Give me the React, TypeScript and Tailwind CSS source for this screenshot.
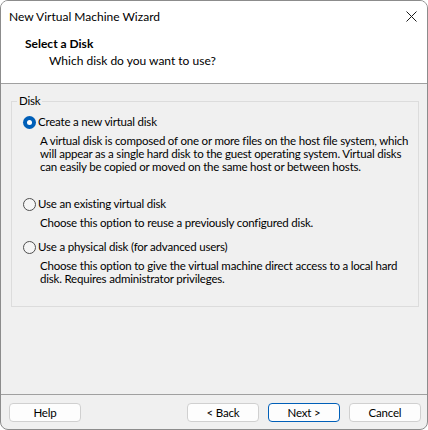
import React from "react";

const OPTIONS = [
    {
        label: "Create a new virtual disk",
        lines: [
            "A virtual disk is composed of one or more files on the host file system, which",
            "will appear as a single hard disk to the guest operating system. Virtual disks",
            "can easily be copied or moved on the same host or between hosts.",
        ],
        checked: true,
        gap: "mt-[4px]",
    },
    {
        label: "Use an existing virtual disk",
        lines: ["Choose this option to reuse a previously configured disk."],
        checked: false,
        gap: "mt-[23px]",
    },
    {
        label: "Use a physical disk (for advanced users)",
        lines: [
            "Choose this option to give the virtual machine direct access to a local hard",
            "disk. Requires administrator privileges.",
        ],
        checked: false,
        gap: "mt-[10px]",
    },
];

function Radio({ checked }: { checked: boolean }) {
    if (checked) {
        return (
            <span className="flex h-[13px] w-[13px] shrink-0 items-center justify-center rounded-full bg-[#005fb8]">
                <span className="h-[5px] w-[5px] rounded-full bg-white"></span>
            </span>
        );
    }
    return <span className="h-[13px] w-[13px] shrink-0 rounded-full border border-[#4f4f4f] bg-[#f5f5f5]"></span>;
}

function Button({ text, primary }: { text: string; primary?: boolean }) {
    return (
        <button
            className={
                primary
                    ? "h-[19px] w-[72px] rounded-[4px] border border-[#005fb8] bg-[#fdfdfd] leading-none text-black"
                    : "h-[19px] w-[72px] rounded-[4px] border border-[#d0d0d0] bg-[#fdfdfd] leading-none text-black"
            }
        >
            {text}
        </button>
    );
}

export default function App() {
    return (
        <div className="h-[430px] w-[428px] bg-white font-[family-name:Lato,'Liberation_Sans',sans-serif] text-[11.5px] tracking-[-0.2px] text-black">
            <div className="flex h-full flex-col overflow-hidden rounded-[8px] border border-[#8c8c8c] bg-[#f0f0f0]">
                {/* title bar */}
                <div className="flex h-[31px] shrink-0 items-center justify-between bg-white pl-[8px] pr-[10px]">
                    <span className="text-[12px] leading-[16px] tracking-normal">New Virtual Machine Wizard</span>
                    <svg width="11" height="11" viewBox="0 0 11 11" className="mt-[-1px]">
                        <path d="M0.5 0.5 L10.5 10.5 M10.5 0.5 L0.5 10.5" stroke="#1a1a1a" strokeWidth="1" />
                    </svg>
                </div>

                {/* header */}
                <div className="h-[52px] shrink-0 border-b border-[#a0a0a0] bg-white pl-[24px] pt-[4px]">
                    <div className="text-[12px] font-bold leading-[16px] tracking-normal">Select a Disk</div>
                    <div className="ml-[24px] mt-[1px] text-[12px] leading-[16px] tracking-normal">Which disk do you want to use?</div>
                </div>

                {/* body */}
                <div className="flex-1 pl-[10px] pr-[8px] pt-[9px]">
                    <fieldset className="min-w-0 border border-[#dcdcdc] p-0">
                        <legend className="ml-[5px] px-[2px] leading-[16px]">Disk</legend>
                        <div className="flex flex-col pb-[21px] pl-[11px] pt-[5px]">
                            {OPTIONS.map((opt, index) => (
                                <div key={index} className={index === 0 ? "" : opt.gap}>
                                    <div className="flex h-[16px] items-center gap-[2px]">
                                        <Radio checked={opt.checked} />
                                        <span className="leading-[16px]">{opt.label}</span>
                                    </div>
                                    <div className="mt-[4px] pl-[17px] leading-[13px]">
                                        {opt.lines.map((line, i) => (
                                            <div key={i} className="whitespace-nowrap">{line}</div>
                                        ))}
                                    </div>
                                </div>
                            ))}
                        </div>
                    </fieldset>
                </div>

                {/* footer */}
                <div className="flex h-[35px] shrink-0 items-start justify-between border-t border-[#a0a0a0] pl-[8px] pr-[6px] pt-[8px]">
                    <Button text="Help" />
                    <div className="flex gap-[9px]">
                        <Button text="< Back" />
                        <Button text="Next >" primary />
                        <Button text="Cancel" />
                    </div>
                </div>
            </div>
        </div>
    );
}
